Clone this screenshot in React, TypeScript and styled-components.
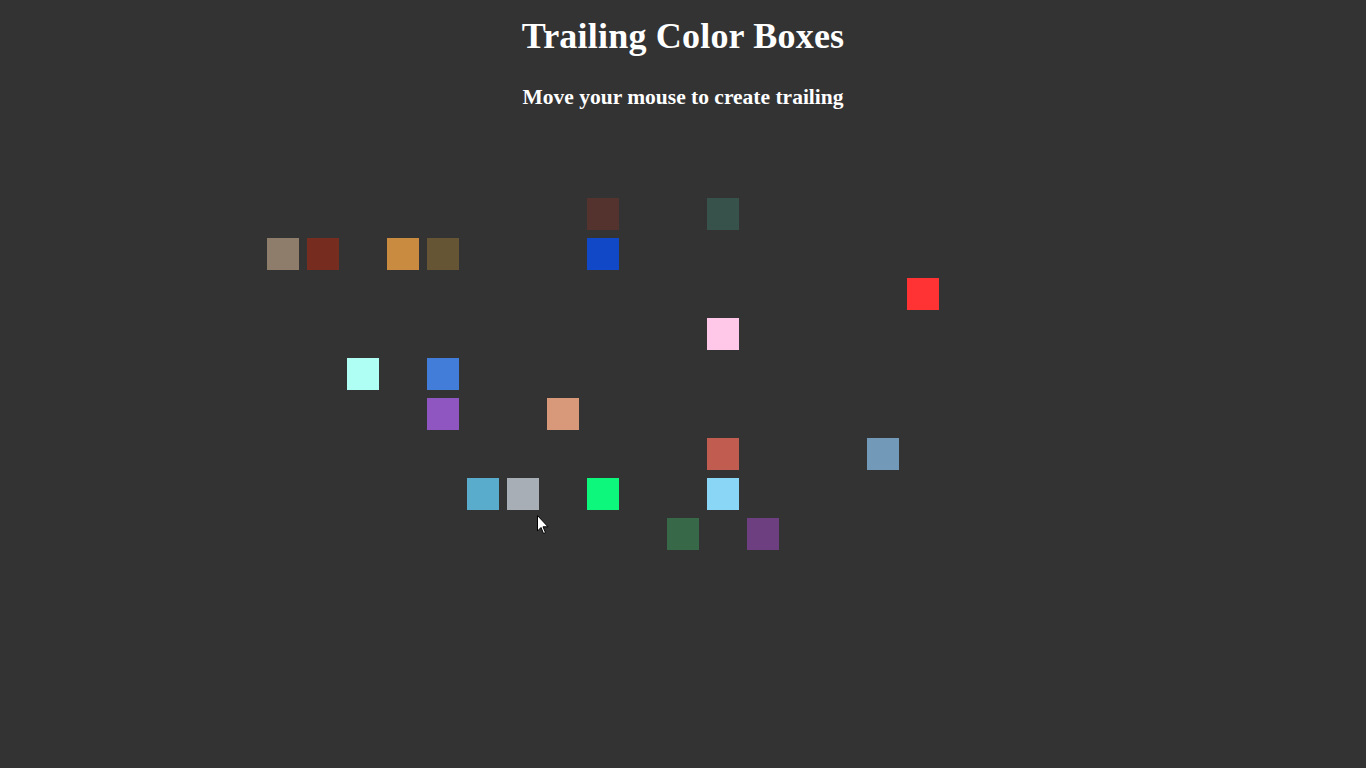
import React from "react";
import styled, { createGlobalStyle } from "styled-components";

const Global = createGlobalStyle`
  html, body { margin: 0; padding: 0; background: #333333; }
  body { font-family: "Liberation Serif", "DejaVu Serif", serif; color: #ffffff; }
`;

const Page = styled.main`
  width: 1366px;
  height: 768px;
  overflow: hidden;
  position: relative;
  display: flex;
  flex-direction: column;
`;

const Header = styled.header`
  display: flex;
  flex-direction: column;
  align-items: center;
  padding-top: 14px;
`;

const Title = styled.h1`
  margin: 0;
  font-size: 36px;
  line-height: 44px;
  font-weight: 700;
  letter-spacing: 0.2px;
`;

const Subtitle = styled.h2`
  margin: 27px 0 0;
  font-size: 21.5px;
  line-height: 24px;
  font-weight: 700;
`;

const Board = styled.section`
  margin: 89px 0 0 267px;
  display: grid;
  grid-template-columns: repeat(17, 32px);
  grid-template-rows: repeat(9, 32px);
  gap: 8px;
`;

const Box = styled.div<{ $c: string; $x: number; $y: number }>`
  width: 32px;
  height: 32px;
  background: ${(p) => p.$c};
  grid-column: ${(p) => p.$x + 1};
  grid-row: ${(p) => p.$y + 1};
`;

const Cursor = styled.svg`
  position: absolute;
  left: 537px;
  top: 515px;
`;

const boxes: [number, number, string][] = [
  [8, 0, "#54332f"],
  [11, 0, "#37524a"],
  [0, 1, "#8d7d6a"],
  [1, 1, "#762d20"],
  [3, 1, "#c98b3f"],
  [4, 1, "#655535"],
  [8, 1, "#1048c8"],
  [16, 2, "#ff3333"],
  [11, 3, "#ffc8e8"],
  [2, 4, "#b0fff4"],
  [4, 4, "#437dda"],
  [4, 5, "#8f55c0"],
  [7, 5, "#d8987a"],
  [11, 6, "#c05c50"],
  [15, 6, "#7399b8"],
  [5, 7, "#5aaccc"],
  [6, 7, "#a8aeb6"],
  [8, 7, "#0cf77c"],
  [11, 7, "#8ad6f6"],
  [10, 8, "#376848"],
  [12, 8, "#6e3f80"],
];

export default function App() {
  return (
    <Page>
      <Global />
      <Header>
        <Title>Trailing Color Boxes</Title>
        <Subtitle>Move your mouse to create trailing</Subtitle>
      </Header>
      <Board>
        {boxes.map(([x, y, c]) => (
          <Box key={`${x}-${y}`} $x={x} $y={y} $c={c} />
        ))}
      </Board>
      <Cursor width="13" height="20" viewBox="0 0 13 20">
        <path d="M0.5 0.5 L0.5 16 L4 12.5 L6.5 18.5 L8.5 17.6 L6 11.8 L11 11.8 Z" fill="#ffffff" stroke="#000000" strokeWidth="1" />
      </Cursor>
    </Page>
  );
}
